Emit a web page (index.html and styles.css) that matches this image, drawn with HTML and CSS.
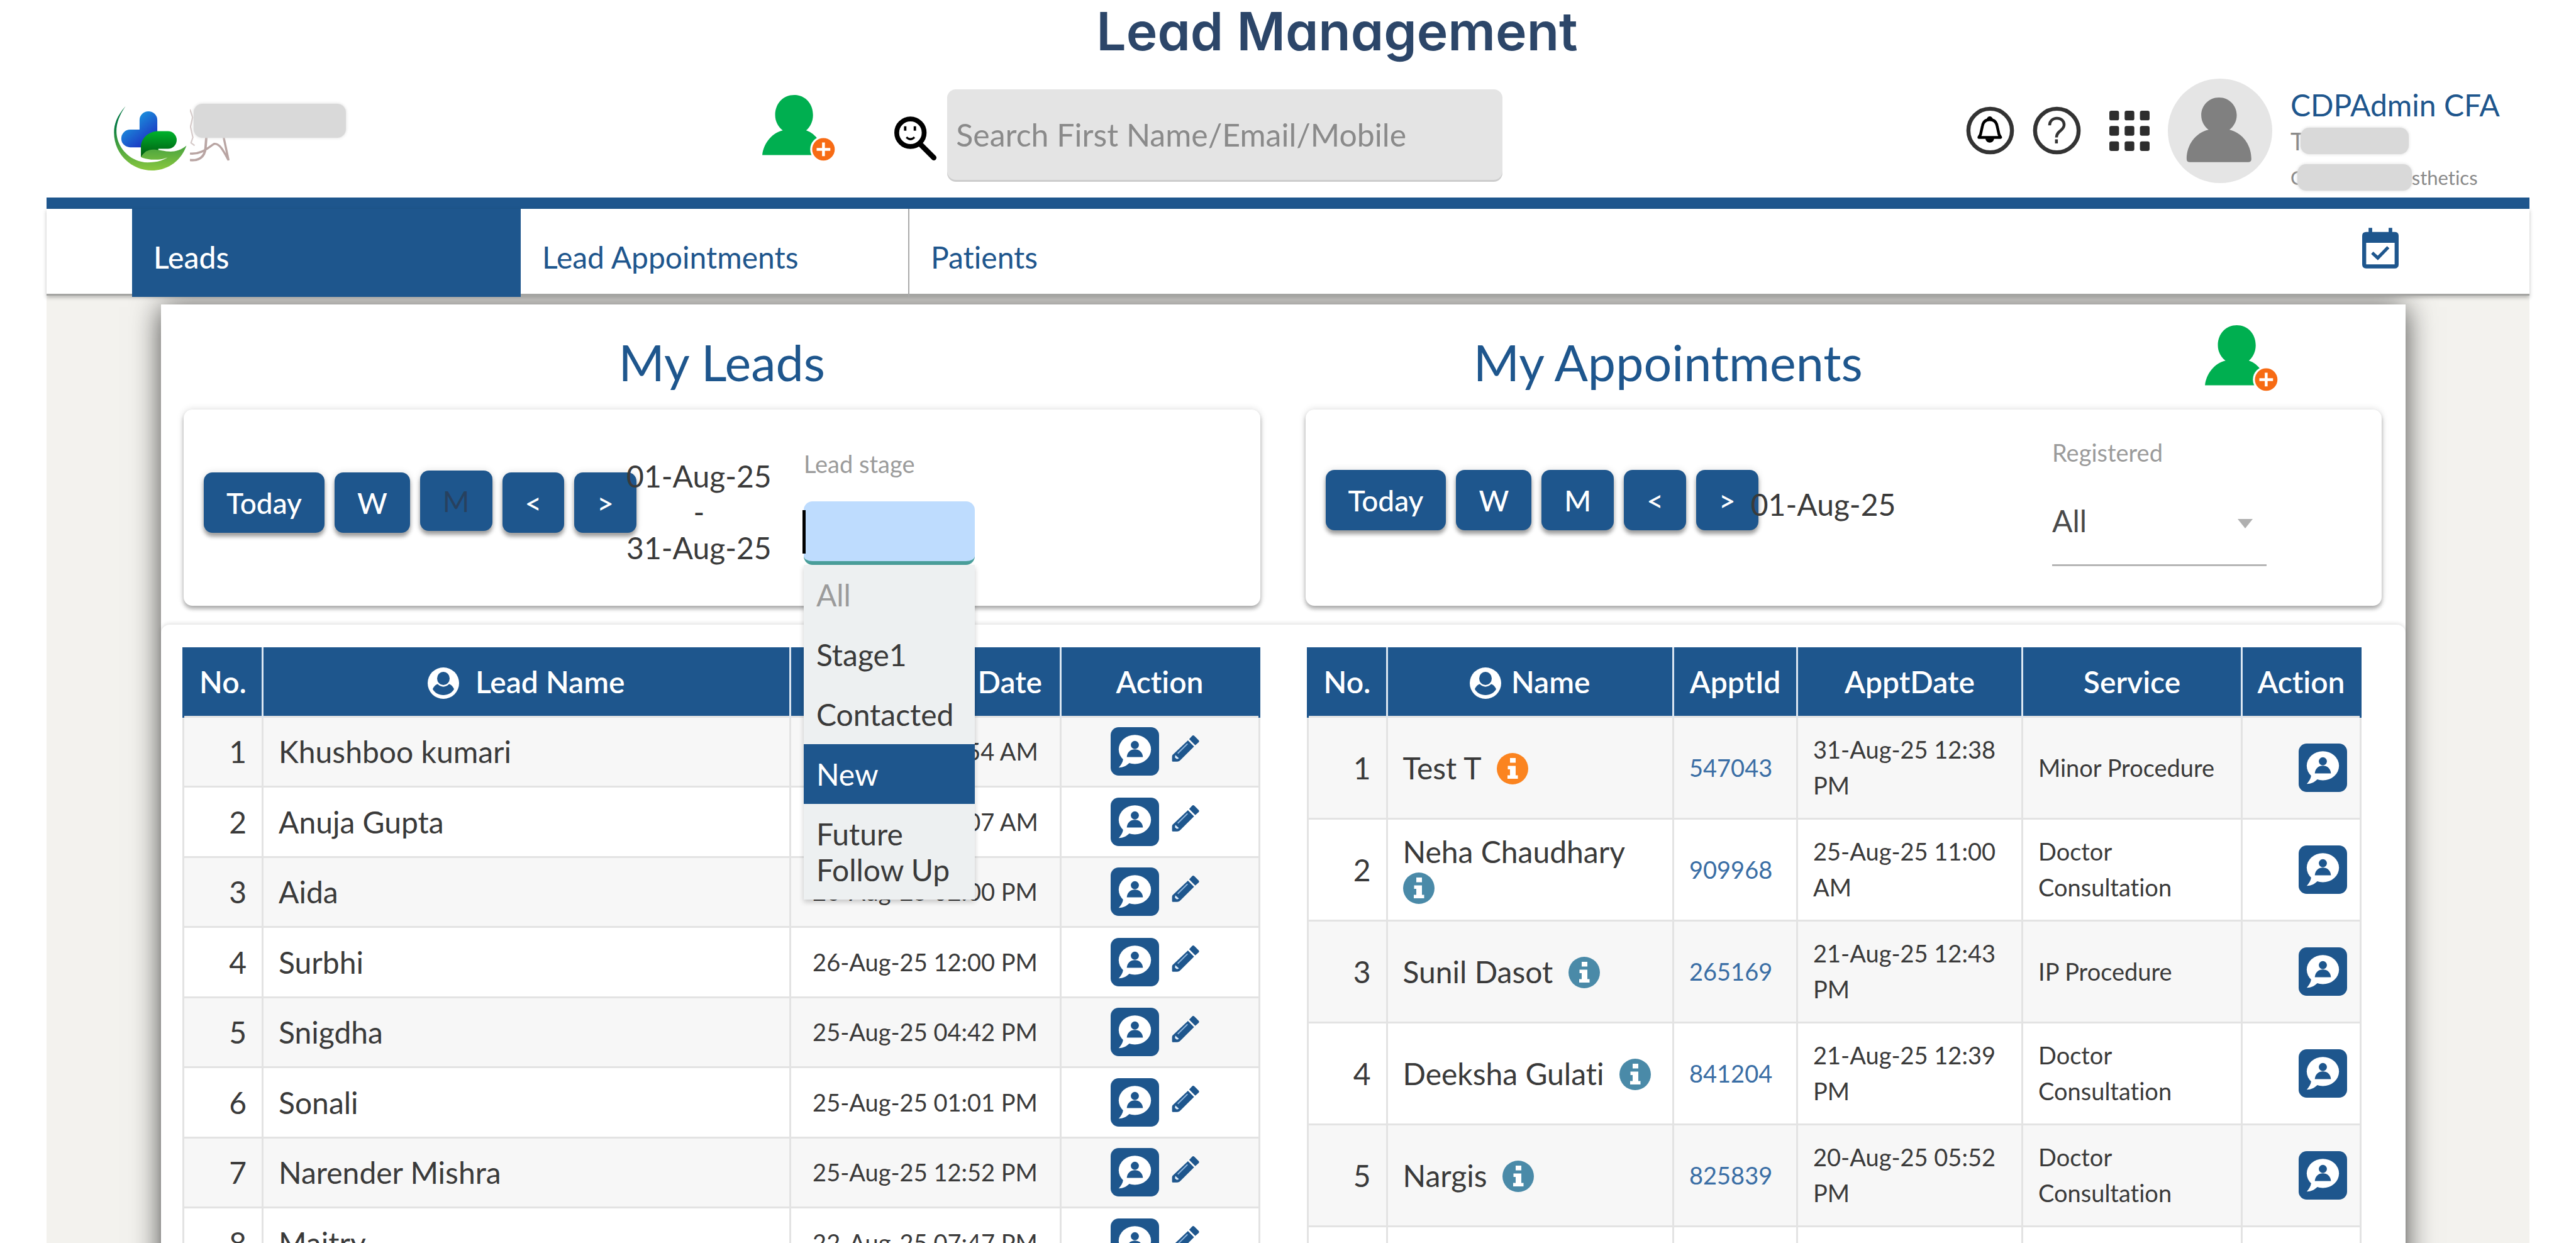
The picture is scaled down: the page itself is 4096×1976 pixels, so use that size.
FILE: index.html
```html
<!DOCTYPE html>
<html lang="en">

<head>
    <meta charset="UTF-8">
    <meta name="viewport" content="width=device-width, initial-scale=1.0">
    <title>Lead Management</title>
    <link rel="stylesheet" href="styles.css">
</head>

<body>
    <!-- shared icons -->
    <svg class="sprite" aria-hidden="true">
        <symbol id="i-add" viewBox="0 0 181 164">
            <path fill="#00af50" d="M79 0C105 0 126 20 126 50C126 66 119 80 109 88C135 97 149 122 153 149H0C3 122 22 95 51 88C40 80 32 66 32 50C32 20 53 0 79 0Z" />
            <circle cx="152" cy="135" r="33" fill="#fff" />
            <circle cx="152" cy="135" r="28" fill="#f76b14" />
            <path stroke="#fff" stroke-width="7" d="M152 118V152M135 135H169" />
        </symbol>
        <symbol id="i-chat" viewBox="0 0 120 120">
            <rect width="120" height="120" rx="20" fill="#1e568d" />
            <ellipse cx="60" cy="55" rx="40" ry="36" fill="#fff" />
            <path fill="#fff" d="M31 79C30 87 26 93 20 100C31 100 39 96 47 88Z" />
            <circle cx="60" cy="44" r="10" fill="#1e568d" />
            <path fill="#1e568d" d="M40 74C41 62 49 55 60 55S79 62 80 74Z" />
        </symbol>
        <symbol id="i-pencil" viewBox="0 0 68 68">
            <path fill="#1e568d" d="M43 11L50 3Q53 0 56 3L66 13Q69 16 66 19L58 26ZM40 14L55 29L22 62Q19 66 14 66H3Q1 66 1 64V53Q1 50 4 48Z" />
            <path stroke="#8db4dc" stroke-width="3" d="M15 46L39 22" />
            <path fill="#dcebfa" d="M9 50L18 58L13 60L8 56Z" />
        </symbol>
        <symbol id="i-user" viewBox="0 0 100 100">
            <circle cx="50" cy="50" r="50" fill="#fff" />
            <path fill="#1e568d" d="M16 69C20 59 27 54 32 53C42 64 58 64 68 53C73 54 80 59 84 69C77 81 65 88 50 88S23 81 16 69Z" />
            <ellipse cx="50" cy="35" rx="20" ry="21" fill="#1e568d" />
        </symbol>
        <symbol id="i-info" viewBox="0 0 100 100">
            <circle cx="50" cy="50" r="50" />
            <path fill="#fff" d="M42 16H60V31H42ZM35 41H60V71H67V82H34V71H42V52H35Z" />
        </symbol>
    </svg>

    <h1 class="page-title">Lead Management</h1>

    <div class="app">
        <header class="topbar">
            <div class="brand">
                <svg class="logo" viewBox="0 0 540 482">
                    <defs>
                        <linearGradient id="g-blue" x1="0" y1="0" x2=".8" y2="1">
                            <stop offset=".15" stop-color="#1ba3e2" />
                            <stop offset=".85" stop-color="#1c3cc4" />
                        </linearGradient>
                        <linearGradient id="g-leaf" x1="0" y1="0" x2="0" y2="1">
                            <stop offset="0" stop-color="#00b22d" />
                            <stop offset="1" stop-color="#00590f" />
                        </linearGradient>
                        <linearGradient id="g-hand" x1="0" y1="0" x2="0" y2="1">
                            <stop offset=".3" stop-color="#047a42" />
                            <stop offset=".65" stop-color="#4da53f" />
                            <stop offset="1" stop-color="#8ac83f" />
                        </linearGradient>
                    </defs>
                    <path fill="url(#g-blue)" d="M54 244A66 66 0 0 1 120 178H190V108A66 66 0 0 1 322 108V310H120A66 66 0 0 1 54 244Z" />
                    <path fill="url(#g-leaf)" d="M200 382V310C200 240 260 190 330 190H401A65 65 0 0 1 401 321H330V340H240Z" />
                    <path fill="url(#g-hand)" d="M86 4C20 78 0 140 0 200C0 360 130 482 282 482C400 482 500 410 539 297C500 330 450 343 410 341C350 335 330 326 290 326C255 326 222 345 200 382C250 405 340 410 399 385C350 416 300 422 250 422C120 422 18 310 18 190C18 130 40 70 86 4Z" />
                </svg>
                <div class="brand-name">
                    <svg class="signature" viewBox="0 0 300 440" fill="none" stroke="#b9a5a3">
                        <path stroke-width="10" d="M0 50L20 110L4 180L22 260L8 300L35 320" opacity=".6" />
                        <path stroke-width="18" d="M0 428C60 436 110 410 116 340L122 262" />
                        <path stroke-width="16" d="M0 380C90 388 140 330 180 308C220 300 250 360 288 430L252 262" />
                    </svg>
                    <span class="mask mask-brand"></span>
                </div>
            </div>

            <div class="search-area">
                <button class="icon-btn top-add" aria-label="Add lead"><svg class="add-icon"><use href="#i-add" /></svg></button>
                <label class="search-icon" for="search" aria-label="Search">
                    <svg viewBox="0 0 106 112" fill="none" stroke="#000">
                        <circle cx="40" cy="42" r="34" stroke-width="12" />
                        <path stroke-width="13" stroke-linecap="round" d="M64 70L98 104" />
                        <path stroke-width="6" d="M27 26V37M51 26V37" />
                        <path stroke-width="5" d="M30 53Q40 63 50 53" />
                    </svg>
                </label>
                <input id="search" class="search" type="text" placeholder="Search First Name/Email/Mobile">
            </div>

            <div class="tools">
                <button class="icon-btn" aria-label="Notifications">
                    <svg class="round-icon" viewBox="0 0 120 120" fill="none">
                        <circle cx="60" cy="60" r="54" stroke="#333" stroke-width="10" />
                        <path stroke="#000" stroke-width="7" stroke-linejoin="round" d="M32 77L36 70L41 48C43 38 50 33 59 33S75 38 77 48L82 70L86 77Z" />
                        <path fill="#000" d="M50 34Q53 25 59 25T68 34ZM48 80H70Q68 90 59 90T48 80Z" />
                    </svg>
                </button>
                <button class="icon-btn" aria-label="Help">
                    <svg class="round-icon" viewBox="0 0 120 120" fill="none" stroke="#333">
                        <circle cx="60" cy="60" r="54" stroke-width="10" />
                        <path stroke-width="7" d="M42 47C42 24 78 24 78 46C78 60 59 61 59 77M59 82V92" />
                    </svg>
                </button>
                <button class="icon-btn apps" aria-label="Apps">
                    <svg class="apps-icon" viewBox="0 0 100 100" fill="#2d2d2d">
                        <rect width="24" height="24" rx="5" />
                        <rect x="38" width="24" height="24" rx="5" />
                        <rect x="76" width="24" height="24" rx="5" />
                        <rect y="38" width="24" height="24" rx="5" />
                        <rect x="38" y="38" width="24" height="24" rx="5" />
                        <rect x="76" y="38" width="24" height="24" rx="5" />
                        <rect y="76" width="24" height="24" rx="5" />
                        <rect x="38" y="76" width="24" height="24" rx="5" />
                        <rect x="76" y="76" width="24" height="24" rx="5" />
                    </svg>
                </button>
                <svg class="avatar" viewBox="0 0 100 100">
                    <circle cx="50" cy="50" r="50" fill="#e5e5e5" />
                    <path fill="#808080" d="M49 18C59 18 66 26 66 35C66 41 63 46 59 49C72 52 80 64 80 77Q80 80 77 80H21Q18 80 18 77C18 64 26 52 39 49C35 46 32 41 32 35C32 26 39 18 49 18Z" />
                </svg>
                <div class="user">
                    <a href="#">CDPAdmin CFA</a>
                    <span class="user-line">T<span class="mask mask-role"></span></span>
                    <span class="user-line small">C<span class="mask mask-clinic"></span>sthetics</span>
                </div>
            </div>
        </header>

        <nav class="tabs">
            <a href="#" class="tab active">Leads</a>
            <a href="#" class="tab">Lead Appointments</a>
            <a href="#" class="tab last">Patients</a>
            <button class="icon-btn calendar" aria-label="Calendar">
                <svg viewBox="0 0 91 101">
                    <path fill="#1e568d" d="M16 0H25V10H66V0H75V10H81Q91 10 91 20V91Q91 101 81 101H10Q0 101 0 91V20Q0 10 10 10H16Z" />
                    <path fill="#fff" d="M10 37H81V91H10Z" />
                    <path fill="none" stroke="#1e568d" stroke-width="8" d="M25 62L39 75L65 48" />
                </svg>
            </button>
        </nav>

        <main class="board">
            <section class="filters">
                <div class="column">
                    <div class="column-head">
                        <h2>My Leads</h2>
                    </div>
                    <div class="panel">
                        <div class="buttons">
                            <button class="btn">Today</button>
                            <button class="btn">W</button>
                            <button class="btn pressed">M</button>
                            <button class="btn">&lt;</button>
                            <button class="btn">&gt;</button>
                        </div>
                        <div class="range">01-Aug-25<br>-<br>31-Aug-25</div>
                        <div class="field stage">
                            <label for="stage">Lead stage</label>
                            <div class="combo">
                                <input id="stage" type="text" role="combobox" aria-expanded="true" aria-controls="stage-list">
                                <span class="caret"></span>
                                <ul id="stage-list" class="options" role="listbox">
                                    <li role="option" class="muted">All</li>
                                    <li role="option">Stage1</li>
                                    <li role="option">Contacted</li>
                                    <li role="option" class="selected" aria-selected="true">New</li>
                                    <li role="option">Future Follow Up</li>
                                </ul>
                            </div>
                        </div>
                    </div>
                </div>

                <div class="column">
                    <div class="column-head">
                        <h2>My Appointments</h2>
                        <button class="icon-btn head-add" aria-label="Add appointment"><svg class="add-icon"><use href="#i-add" /></svg></button>
                    </div>
                    <div class="panel appointments">
                        <div class="buttons">
                            <button class="btn">Today</button>
                            <button class="btn">W</button>
                            <button class="btn">M</button>
                            <button class="btn">&lt;</button>
                            <button class="btn">&gt;</button>
                        </div>
                        <div class="range">01-Aug-25</div>
                        <div class="field registered">
                            <label for="registered">Registered</label>
                            <div class="select-wrap">
                                <select id="registered">
                                    <option>All</option>
                                    <option>Yes</option>
                                    <option>No</option>
                                </select>
                            </div>
                        </div>
                    </div>
                </div>
            </section>

            <section class="tables">
                <table class="leads">
                    <colgroup>
                        <col class="w-no">
                        <col>
                        <col class="w-created">
                        <col class="w-action">
                    </colgroup>
                    <thead>
                        <tr>
                            <th>No.</th>
                            <th><svg class="user-icon wide"><use href="#i-user" /></svg>Lead Name</th>
                            <th><svg class="user-icon wide"><use href="#i-user" /></svg>Creation Date</th>
                            <th>Action</th>
                        </tr>
                    </thead>
                    <tbody>
                        <tr>
                            <td class="no">1</td>
                            <td>Khushboo kumari</td>
                            <td class="date">27-Aug-25 11:54 AM</td>
                            <td class="action">
                                <div class="actions">
                                    <button class="icon-btn" aria-label="Chat"><svg class="chat"><use href="#i-chat" /></svg></button>
                                    <button class="icon-btn" aria-label="Edit"><svg class="pencil"><use href="#i-pencil" /></svg></button>
                                </div>
                            </td>
                        </tr>
                        <tr>
                            <td class="no">2</td>
                            <td>Anuja Gupta</td>
                            <td class="date">27-Aug-25 11:07 AM</td>
                            <td class="action">
                                <div class="actions">
                                    <button class="icon-btn" aria-label="Chat"><svg class="chat"><use href="#i-chat" /></svg></button>
                                    <button class="icon-btn" aria-label="Edit"><svg class="pencil"><use href="#i-pencil" /></svg></button>
                                </div>
                            </td>
                        </tr>
                        <tr>
                            <td class="no">3</td>
                            <td>Aida</td>
                            <td class="date">26-Aug-25 02:00 PM</td>
                            <td class="action">
                                <div class="actions">
                                    <button class="icon-btn" aria-label="Chat"><svg class="chat"><use href="#i-chat" /></svg></button>
                                    <button class="icon-btn" aria-label="Edit"><svg class="pencil"><use href="#i-pencil" /></svg></button>
                                </div>
                            </td>
                        </tr>
                        <tr>
                            <td class="no">4</td>
                            <td>Surbhi</td>
                            <td class="date">26-Aug-25 12:00 PM</td>
                            <td class="action">
                                <div class="actions">
                                    <button class="icon-btn" aria-label="Chat"><svg class="chat"><use href="#i-chat" /></svg></button>
                                    <button class="icon-btn" aria-label="Edit"><svg class="pencil"><use href="#i-pencil" /></svg></button>
                                </div>
                            </td>
                        </tr>
                        <tr>
                            <td class="no">5</td>
                            <td>Snigdha</td>
                            <td class="date">25-Aug-25 04:42 PM</td>
                            <td class="action">
                                <div class="actions">
                                    <button class="icon-btn" aria-label="Chat"><svg class="chat"><use href="#i-chat" /></svg></button>
                                    <button class="icon-btn" aria-label="Edit"><svg class="pencil"><use href="#i-pencil" /></svg></button>
                                </div>
                            </td>
                        </tr>
                        <tr>
                            <td class="no">6</td>
                            <td>Sonali</td>
                            <td class="date">25-Aug-25 01:01 PM</td>
                            <td class="action">
                                <div class="actions">
                                    <button class="icon-btn" aria-label="Chat"><svg class="chat"><use href="#i-chat" /></svg></button>
                                    <button class="icon-btn" aria-label="Edit"><svg class="pencil"><use href="#i-pencil" /></svg></button>
                                </div>
                            </td>
                        </tr>
                        <tr>
                            <td class="no">7</td>
                            <td>Narender Mishra</td>
                            <td class="date">25-Aug-25 12:52 PM</td>
                            <td class="action">
                                <div class="actions">
                                    <button class="icon-btn" aria-label="Chat"><svg class="chat"><use href="#i-chat" /></svg></button>
                                    <button class="icon-btn" aria-label="Edit"><svg class="pencil"><use href="#i-pencil" /></svg></button>
                                </div>
                            </td>
                        </tr>
                        <tr>
                            <td class="no">8</td>
                            <td>Maitry</td>
                            <td class="date">22-Aug-25 07:47 PM</td>
                            <td class="action">
                                <div class="actions">
                                    <button class="icon-btn" aria-label="Chat"><svg class="chat"><use href="#i-chat" /></svg></button>
                                    <button class="icon-btn" aria-label="Edit"><svg class="pencil"><use href="#i-pencil" /></svg></button>
                                </div>
                            </td>
                        </tr>
                    </tbody>
                </table>

                <div class="appts-wrap">
                    <table class="appts">
                        <colgroup>
                            <col class="w-no">
                            <col>
                            <col class="w-id">
                            <col class="w-date">
                            <col class="w-service">
                            <col class="w-chat">
                        </colgroup>
                        <thead>
                            <tr>
                                <th>No.</th>
                                <th><svg class="user-icon"><use href="#i-user" /></svg>Name</th>
                                <th>ApptId</th>
                                <th>ApptDate</th>
                                <th>Service</th>
                                <th>Action</th>
                            </tr>
                        </thead>
                        <tbody>
                            <tr>
                                <td class="no">1</td>
                                <td><span class="name">Test T</span> <svg class="info new"><use href="#i-info" /></svg></td>
                                <td class="small"><a href="#">547043</a></td>
                                <td class="small">31-Aug-25 12:38 PM</td>
                                <td class="small">Minor Procedure</td>
                                <td class="chat-cell"><button class="icon-btn" aria-label="Chat"><svg class="chat"><use href="#i-chat" /></svg></button></td>
                            </tr>
                            <tr>
                                <td class="no">2</td>
                                <td><span class="name">Neha Chaudhary</span> <svg class="info"><use href="#i-info" /></svg></td>
                                <td class="small"><a href="#">909968</a></td>
                                <td class="small">25-Aug-25 11:00 AM</td>
                                <td class="small">Doctor Consultation</td>
                                <td class="chat-cell"><button class="icon-btn" aria-label="Chat"><svg class="chat"><use href="#i-chat" /></svg></button></td>
                            </tr>
                            <tr>
                                <td class="no">3</td>
                                <td><span class="name">Sunil Dasot</span> <svg class="info"><use href="#i-info" /></svg></td>
                                <td class="small"><a href="#">265169</a></td>
                                <td class="small">21-Aug-25 12:43 PM</td>
                                <td class="small">IP Procedure</td>
                                <td class="chat-cell"><button class="icon-btn" aria-label="Chat"><svg class="chat"><use href="#i-chat" /></svg></button></td>
                            </tr>
                            <tr>
                                <td class="no">4</td>
                                <td><span class="name">Deeksha Gulati</span> <svg class="info"><use href="#i-info" /></svg></td>
                                <td class="small"><a href="#">841204</a></td>
                                <td class="small">21-Aug-25 12:39 PM</td>
                                <td class="small">Doctor Consultation</td>
                                <td class="chat-cell"><button class="icon-btn" aria-label="Chat"><svg class="chat"><use href="#i-chat" /></svg></button></td>
                            </tr>
                            <tr>
                                <td class="no">5</td>
                                <td><span class="name">Nargis</span> <svg class="info"><use href="#i-info" /></svg></td>
                                <td class="small"><a href="#">825839</a></td>
                                <td class="small">20-Aug-25 05:52 PM</td>
                                <td class="small">Doctor Consultation</td>
                                <td class="chat-cell"><button class="icon-btn" aria-label="Chat"><svg class="chat"><use href="#i-chat" /></svg></button></td>
                            </tr>
                            <tr>
                                <td class="no"></td>
                                <td></td>
                                <td></td>
                                <td></td>
                                <td></td>
                                <td></td>
                            </tr>
                        </tbody>
                    </table>
                </div>
            </section>
        </main>
    </div>
</body>

</html>
```
FILE: styles.css
```css
* {
    box-sizing: border-box;
}

body {
    margin: 0;
    height: 100vh;
    overflow: hidden;
    background: white;
    color: #3a3a3a;
    font-family: Lato, sans-serif;
    font-size: 48px;
    line-height: 57px;
    font-variant-ligatures: no-common-ligatures;
}

a {
    color: #1e568d;
    text-decoration: none;
}

input,
select,
button {
    font: inherit;
}

svg {
    display: block;
}

.sprite {
    position: absolute;
    width: 0;
    height: 0;
}

.page-title {
    margin: 0;
    padding-left: 156px;
    color: #2c4669;
    font-family: Inter, sans-serif;
    font-size: 84px;
    font-weight: 600;
    font-feature-settings: "cv11";
    line-height: 99px;
    text-align: center;
}

.app {
    margin: 0 74px;
    background: #f3f2ee;
}

.icon-btn {
    display: block;
    padding: 0;
    border: 0;
    background: none;
}

.mask {
    display: inline-block;
    background: #d9d9d9;
    border-radius: 14px;
    box-shadow: 0 0 5px #d9d9d9;
}

/* top bar */
.topbar {
    display: grid;
    grid-template-columns: 7fr auto 5fr auto;
    align-items: center;
    height: 233px;
    padding: 2px 40px 0 107px;
    background: white;
    border-bottom: 18px solid #1e568d;
}

.brand {
    display: flex;
    align-items: center;
    gap: 5px;
    padding-top: 24px;
}

.logo {
    width: 116px;
    height: 103px;
}

.brand-name {
    position: relative;
    width: 250px;
    height: 114px;
}

.signature {
    width: 64px;
    height: 94px;
}

.mask-brand {
    position: absolute;
    top: 2px;
    left: 6px;
    width: 242px;
    height: 54px;
}

.search-area {
    display: flex;
    align-items: center;
}

.add-icon {
    width: 116px;
    height: 105px;
}

.top-add {
    margin-bottom: 8px;
}

.search-icon {
    margin: 24px 16px 0 94px;
}

.search-icon svg {
    width: 68px;
    height: 72px;
}

.search {
    width: 883px;
    height: 144px;
    margin-top: 12px;
    padding: 0 14px;
    border: 0;
    border-radius: 14px;
    background: #e4e4e4;
    box-shadow: 0 3px 0 #cdcdcd;
    font-size: 50px;
}

.search::placeholder {
    color: #8a8a8a;
    opacity: 1;
}

.tools {
    grid-column: 4;
    display: flex;
    align-items: center;
    gap: 29px;
}

.round-icon {
    width: 77px;
    height: 77px;
}

.apps {
    margin-left: 16px;
}

.apps-icon {
    width: 64px;
    height: 64px;
}

.avatar {
    width: 166px;
    height: 166px;
}

.user {
    display: flex;
    flex-direction: column;
    width: 340px;
    padding-top: 34px;
    white-space: nowrap;
}

.user-line {
    display: flex;
    align-items: center;
    height: 58px;
    color: #8a8a8a;
    font-size: 38px;
}

.user-line.small {
    font-size: 31px;
}

.mask-role {
    width: 172px;
    height: 42px;
    margin-left: -6px;
}

.mask-clinic {
    width: 182px;
    height: 42px;
    margin-left: -10px;
}

/* tabs */
.tabs {
    position: relative;
    z-index: 1;
    display: flex;
    height: 138px;
    padding: 0 208px 0 136px;
    background: white;
    border-bottom: 3px solid #a5a5a3;
    box-shadow: 0 3px 6px rgba(0, 0, 0, 0.25);
}

.tab {
    width: 618px;
    height: 140px;
    padding: 48px 34px 0;
    border-right: 2px solid #a9a9a9;
}

.tab.active {
    background: #1e568d;
    border-color: #1e568d;
    color: white;
    font-weight: 500;
}

.tab.last {
    border: 0;
}

.calendar {
    margin: 0 0 10px auto;
}

.calendar svg {
    width: 58px;
    height: 65px;
}

/* board */
.board {
    margin: 14px 197px 0 182px;
    background: white;
    box-shadow: 0 4px 44px rgba(0, 0, 0, 0.7);
}

.filters {
    display: flex;
    gap: 72px;
    padding: 0 38px 30px 36px;
}

.column {
    flex: 1;
}

.column-head {
    display: flex;
    height: 167px;
    padding-top: 45px;
}

h2 {
    flex: 1;
    margin: 0;
    color: #1e568d;
    font-size: 79px;
    font-weight: 400;
    line-height: 94px;
    text-align: center;
}

.head-add {
    align-self: flex-start;
    margin: -12px 165px 0 277px;
}

.panel {
    display: flex;
    align-items: flex-start;
    height: 312px;
    padding: 0 32px;
    border-radius: 14px;
    background: white;
    box-shadow: 0 5px 6px rgba(0, 0, 0, 0.28), 0 0 12px rgba(0, 0, 0, 0.14);
}

.buttons {
    display: flex;
    gap: 16px;
    margin-top: 100px;
}

.btn {
    height: 96px;
    padding: 0 36px;
    border: 0;
    border-radius: 14px;
    background: #1e568d;
    box-shadow: 0 6px 6px rgba(0, 0, 0, 0.35), 0 0 12px rgba(0, 0, 0, 0.12);
    color: white;
    font-size: 46px;
    font-weight: 500;
}

.btn.pressed {
    margin: -3px 0 3px;
    color: #27415f;
    font-weight: 400;
}

.range {
    z-index: 1;
    width: 231px;
    margin: 77px 51px 0 -16px;
    text-align: center;
}

.appointments .buttons {
    margin-top: 96px;
}

.appointments .range {
    margin: 122px 0 0 -12px;
}

.field label {
    display: block;
    color: #9b9b9b;
    font-size: 38px;
    line-height: 46px;
}

.stage {
    width: 272px;
    padding-top: 63px;
}

.combo {
    position: relative;
    margin-top: 37px;
}

.combo input {
    display: block;
    width: 100%;
    height: 101px;
    border: 0;
    border-bottom: 6px solid #4a9f9b;
    border-radius: 14px;
    background: #bedcfe;
}

.caret {
    position: absolute;
    top: 14px;
    left: -2px;
    width: 5px;
    height: 69px;
    background: black;
}

.options {
    position: absolute;
    top: 100%;
    left: 0;
    z-index: 2;
    width: 100%;
    margin: 0;
    padding: 0;
    background: #edf0f1;
    box-shadow: 0 4px 8px rgba(0, 0, 0, 0.2);
    list-style: none;
}

.options li {
    padding: 19px 20px;
}

.options .muted {
    color: #9b9b9b;
}

.options .selected {
    background: #1e568d;
    color: white;
}

.registered {
    width: 341px;
    margin: 45px 151px 0 auto;
}

.select-wrap {
    position: relative;
    margin-top: 15px;
}

.select-wrap::after {
    content: "";
    position: absolute;
    top: 68px;
    right: 22px;
    border: 12px solid transparent;
    border-top: 15px solid #b0b0b0;
    border-bottom: 0;
    pointer-events: none;
}

select {
    width: 100%;
    height: 143px;
    padding: 0;
    border: 0;
    border-bottom: 3px solid #b5b5b5;
    border-radius: 0;
    background: none;
    color: #4a4a4a;
    appearance: none;
}

/* tables */
.tables {
    display: grid;
    grid-template-columns: 1fr 1fr;
    gap: 74px;
    align-items: start;
    padding: 36px 34px;
    border-radius: 14px;
    box-shadow: 0 -2px 6px rgba(0, 0, 0, 0.12);
}

.appts-wrap {
    padding-right: 36px;
}

table {
    width: 100%;
    border-collapse: collapse;
    table-layout: fixed;
}

.w-no {
    width: 126px;
}

.w-created {
    width: 430px;
}

.w-action {
    width: 316px;
}

.w-id {
    width: 197px;
}

.w-date {
    width: 358px;
}

.w-service {
    width: 349px;
}

.w-chat {
    width: 189px;
}

th {
    height: 110px;
    padding: 0;
    border-left: 3px solid #dbe6f1;
    border-right: 3px solid #dbe6f1;
    background: #1e568d;
    color: white;
    font-weight: 600;
    white-space: nowrap;
}

th:first-child {
    border-left-color: #1e568d;
}

th:last-child {
    border-right-color: #1e568d;
}

td {
    height: 111px;
    padding: 0 24px;
    border: 3px solid #e3e3e3;
}

tbody tr:nth-child(odd) {
    background: #f7f7f7;
}

.leads tr:nth-child(even) td {
    height: 112px;
}

.appts td {
    height: 162px;
}

.no {
    text-align: right;
}

.date {
    padding: 0;
    font-size: 38px;
    text-align: center;
}

.small {
    font-size: 38px;
}

.small a {
    color: #3a6ea5;
}

.action {
    padding: 0 0 0 78px;
}

.actions {
    display: flex;
    align-items: center;
    gap: 20px;
}

.chat {
    width: 77px;
    height: 77px;
}

.pencil {
    width: 44px;
    height: 44px;
    margin-bottom: 10px;
}

.chat-cell {
    padding: 0 20px;
}

.chat-cell .icon-btn {
    margin-left: auto;
}

.user-icon {
    display: inline-block;
    width: 50px;
    height: 50px;
    margin-right: 16px;
    vertical-align: -9px;
}

.user-icon.wide {
    margin-right: 26px;
}

.name {
    margin-right: 12px;
}

.info {
    display: inline-block;
    width: 50px;
    height: 50px;
    fill: #4a8aa8;
    vertical-align: -8px;
}

.info.new {
    fill: #fb8420;
}
```
